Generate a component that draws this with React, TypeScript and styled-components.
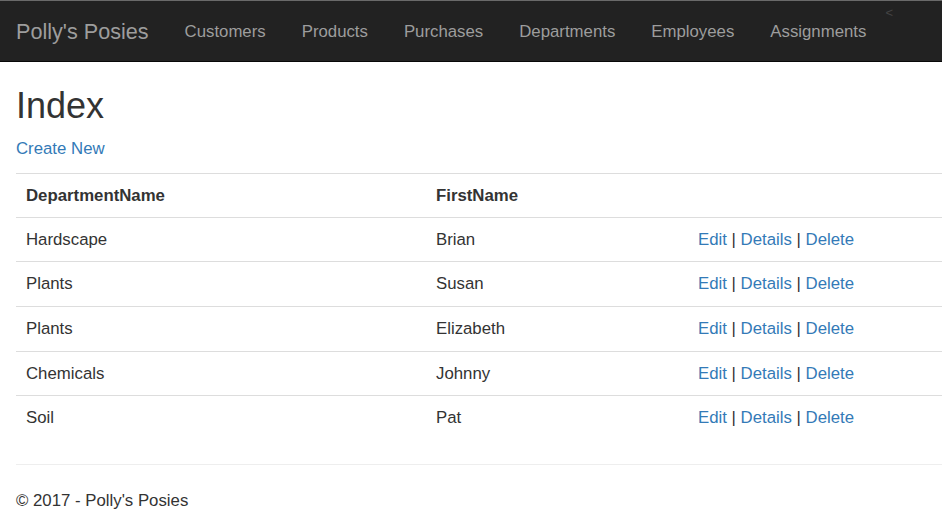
import React from "react";
import styled, { createGlobalStyle } from "styled-components";

const GlobalStyle = createGlobalStyle`
  html, body {
    margin: 0;
    padding: 0;
    background: #fff;
  }
  body {
    font-family: "Liberation Sans", Arial, Helvetica, sans-serif;
    font-size: 16.8px;
    line-height: 24px;
    color: #333;
  }
  * { box-sizing: border-box; }
`;

const Navbar = styled.nav`
  display: flex;
  align-items: stretch;
  height: 62px;
  background: #222;
  border-top: 1px solid #6a6a6a;
  border-bottom: 1px solid #080808;
`;

const Brand = styled.a`
  display: flex;
  align-items: center;
  padding: 2px 18px 0 16px;
  font-size: 21.6px;
  color: #9d9d9d;
  text-decoration: none;
`;

const NavList = styled.ul`
  display: flex;
  list-style: none;
  margin: 0;
  padding: 0;
`;

const NavItem = styled.li`
  display: flex;
`;

const NavLink = styled.a`
  display: flex;
  align-items: center;
  padding: 2px 18px 0;
  font-size: 16.8px;
  color: #9d9d9d;
  text-decoration: none;
`;

const Stray = styled.span`
  align-self: flex-start;
  margin-left: 1px;
  padding-top: 2px;
  font-size: 13px;
  line-height: 20px;
  color: #444;
`;

const Container = styled.main`
  padding: 0 0 0 16px;
`;

const Title = styled.h2`
  margin: 24px 0 11px;
  font-size: 36px;
  font-weight: 500;
  line-height: 39.6px;
  color: #333;
`;

const Para = styled.p`
  margin: 0 0 12px;
`;

const Link = styled.a`
  color: #337ab7;
  text-decoration: none;
`;

const Table = styled.table`
  width: 100%;
  border-collapse: collapse;
  border-spacing: 0;
  table-layout: fixed;
  margin-bottom: 23.4px;
`;

const HeadCell = styled.th`
  padding: 10.6px 10px 8.6px;
  text-align: left;
  font-weight: bold;
  line-height: 24px;
  border-top: 1px solid #ddd;
`;

const Cell = styled.td`
  padding: 10px 10px 9.6px;
  line-height: 24px;
  vertical-align: top;
  border-top: 1px solid #ddd;
`;

const Rule = styled.hr`
  margin: 24px 0;
  border: 0;
  border-top: 1px solid #eee;
`;

const Footer = styled.footer`
  p {
    margin: 0 0 12px;
  }
`;

const rows = [
  ["Hardscape", "Brian"],
  ["Plants", "Susan"],
  ["Plants", "Elizabeth"],
  ["Chemicals", "Johnny"],
  ["Soil", "Pat"],
];

const navItems = ["Customers", "Products", "Purchases", "Departments", "Employees", "Assignments"];

export default function App() {
  return (
    <>
      <GlobalStyle />
      <Navbar>
        <Brand href="#">Polly's Posies</Brand>
        <NavList>
          {navItems.map((n) => (
            <NavItem key={n}>
              <NavLink href="#">{n}</NavLink>
            </NavItem>
          ))}
        </NavList>
        <Stray>&lt;</Stray>
      </Navbar>
      <Container>
        <Title>Index</Title>
        <Para>
          <Link href="#">Create New</Link>
        </Para>
        <Table>
          <colgroup>
            <col style={{ width: 410 }} />
            <col style={{ width: 262 }} />
            <col />
          </colgroup>
          <tbody>
            <tr>
              <HeadCell>DepartmentName</HeadCell>
              <HeadCell>FirstName</HeadCell>
              <HeadCell></HeadCell>
            </tr>
            {rows.map(([d, f], i) => (
              <tr key={i}>
                <Cell>{d}</Cell>
                <Cell>{f}</Cell>
                <Cell>
                  <Link href="#">Edit</Link> | <Link href="#">Details</Link> |{" "}
                  <Link href="#">Delete</Link>
                </Cell>
              </tr>
            ))}
          </tbody>
        </Table>
        <Rule />
        <Footer>
          <p>© 2017 - Polly's Posies</p>
        </Footer>
      </Container>
    </>
  );
}
